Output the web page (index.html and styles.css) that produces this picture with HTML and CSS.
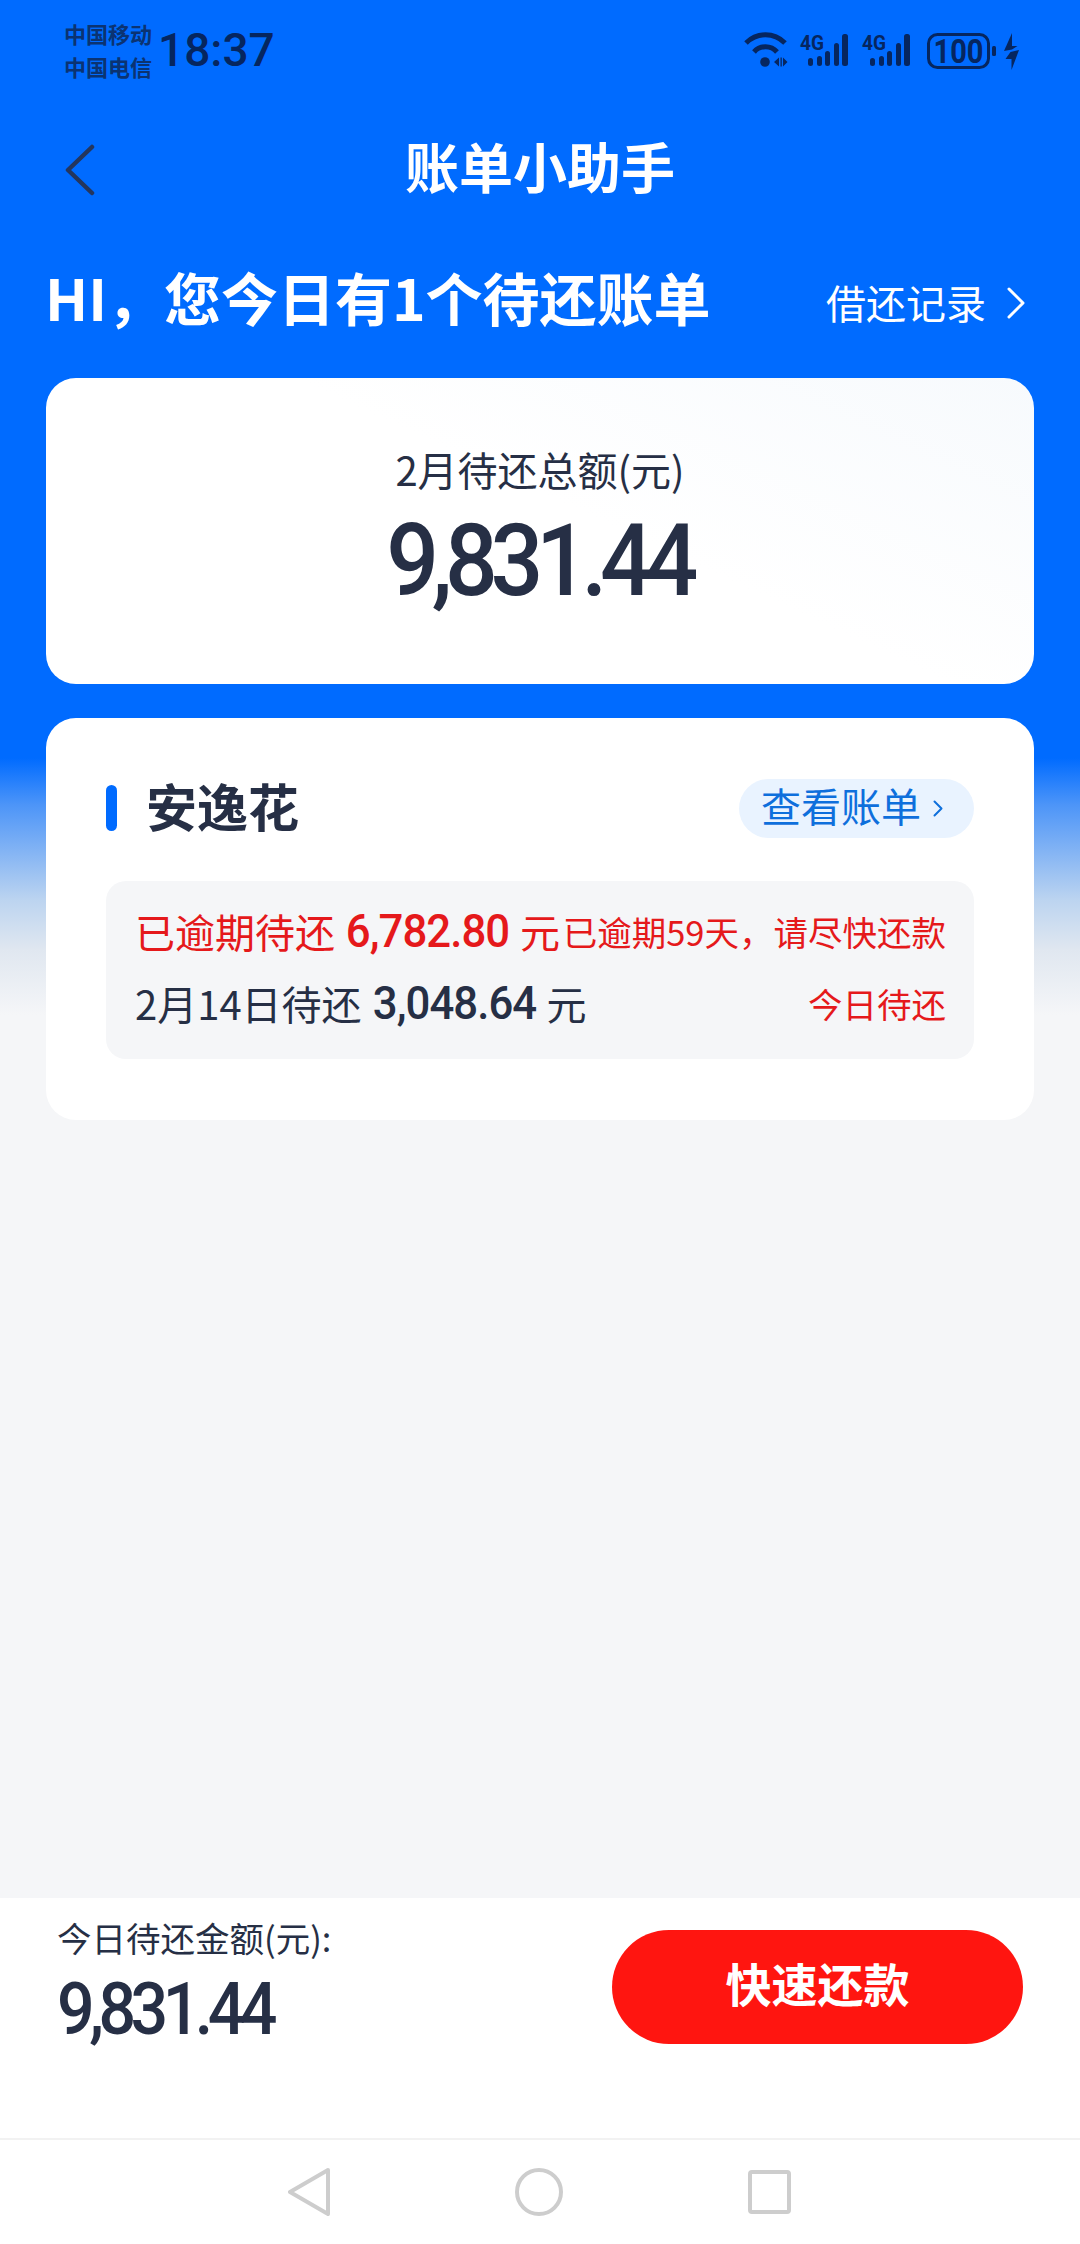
FILE: index.html
```html
<!DOCTYPE html>
<html lang="zh-CN">
<head>
<meta charset="utf-8">
<title>账单小助手</title>
<link rel="stylesheet" href="styles.css">
</head>
<body>
<div class="screen">
  <main class="main">
    <div class="status">
      <div class="carriers"><span>中国移动</span><span>中国电信</span></div>
      <div class="clock">18:37</div>
      <svg class="status-icons" width="276" height="40" viewBox="0 0 276 40">
        <g class="ico-stroke" fill="none" stroke-width="5">
          <path d="M2 12 C13 1 30 1 41 12"/>
          <path d="M10 21 C16 14 27 14 33 21"/>
        </g>
        <circle class="ico-fill" cx="21" cy="31" r="4.8"/>
        <path class="ico-fill" d="M30 31l5-4.500v9zM36.500 26.500h1.300v9h-1.300zM39 26.500l4.500 4.500-4.500 4.500z"/>
        <text class="ico-4g" x="56" y="19" textLength="24" lengthAdjust="spacingAndGlyphs">4G</text>
        <g class="ico-fill">
          <rect x="64" y="27" width="5" height="8" rx="2.5"/>
          <rect x="73" y="25" width="5" height="10" rx="2.5"/>
          <rect x="81" y="20" width="5" height="15" rx="2.5"/>
          <rect x="90" y="12" width="5" height="23" rx="2.5"/>
          <rect x="98" y="3" width="6" height="32" rx="2.5"/>
        </g>
        <text class="ico-4g" x="118" y="19" textLength="24" lengthAdjust="spacingAndGlyphs">4G</text>
        <g class="ico-fill">
          <rect x="126" y="27" width="5" height="8" rx="2.5"/>
          <rect x="135" y="25" width="5" height="10" rx="2.5"/>
          <rect x="143" y="20" width="5" height="15" rx="2.5"/>
          <rect x="152" y="12" width="5" height="23" rx="2.5"/>
          <rect x="160" y="3" width="6" height="32" rx="2.5"/>
        </g>
        <rect class="ico-stroke" x="184.5" y="3.5" width="60" height="33" rx="9" fill="none" stroke-width="3"/>
        <text class="ico-batt" x="214.5" y="31.500" text-anchor="middle" textLength="50" lengthAdjust="spacingAndGlyphs">100</text>
        <rect class="ico-fill" x="248" y="15" width="4" height="10" rx="1.5"/>
        <path class="ico-fill" d="M268 2 L260 20 L268 18.500 Z"/>
        <path class="ico-fill" d="M268 3 L268 15 L273.500 15 L268 18.500 Z"/>
        <path class="ico-fill" d="M266.500 21 L275 19 L267.500 39 L267.500 28 L261.500 28 Z"/>
      </svg>
    </div>

    <header class="navbar">
      <svg class="back" width="31" height="52" viewBox="0 0 31 52"><path d="M28 3 L4 26 L28 49" fill="none" stroke-width="4.500" stroke-linecap="round" stroke-linejoin="round"/></svg>
      <h1 class="title">账单小助手</h1>
    </header>

    <section class="greeting">
      <h2 class="hello">HI，您今日有1个待还账单</h2>
      <div class="records">借还记录
        <svg class="records-arrow" width="20" height="34" viewBox="0 0 20 34"><path d="M3 3 L17 17 L3 31" fill="none" stroke="#fff" stroke-width="3" stroke-linecap="round" stroke-linejoin="round"/></svg>
      </div>
    </section>

    <section class="card total">
      <div class="total-label">2月待还总额(元)</div>
      <div class="total-num"><span class="num num-lg">9,831.44</span></div>
    </section>

    <section class="card bills">
      <div class="bills-head">
        <div class="bills-name"><i class="bar"></i><span class="name">安逸花</span></div>
        <div class="pill"><span class="pill-text">查看账单</span><svg class="pill-arrow" width="10" height="17" viewBox="0 0 10 17"><path d="M1.500 1.500 L8.500 8.500 L1.500 15.500" fill="none" stroke-width="2" stroke-linecap="round" stroke-linejoin="round"/></svg></div>
      </div>
      <div class="rows">
        <div class="row red">
          <div class="row-left">已逾期待还<span class="num num-sm">6,782.80</span>元</div>
          <div class="row-note">已逾期59天，请尽快还款</div>
        </div>
        <div class="row">
          <div class="row-left">2月14日待还<span class="num num-sm">3,048.64</span>元</div>
          <div class="row-note red">今日待还</div>
        </div>
      </div>
    </section>
  </main>

  <footer class="paybar">
    <div class="pay-info">
      <div class="pay-label">今日待还金额(元):</div>
      <div class="pay-num"><span class="num num-md">9,831.44</span></div>
    </div>
    <button class="pay-btn">快速还款</button>
  </footer>

  <nav class="sysnav">
    <svg width="42" height="48" viewBox="0 0 42 48"><path d="M40 2 L2 24 L40 46 Z" fill="none" stroke="#cdcdcd" stroke-width="4" stroke-linejoin="round"/></svg>
    <svg width="48" height="48" viewBox="0 0 48 48"><circle cx="24" cy="24" r="22" fill="none" stroke="#cdcdcd" stroke-width="4"/></svg>
    <svg width="43" height="44" viewBox="0 0 43 44"><rect x="2" y="2" width="39" height="40" rx="2" fill="none" stroke="#cdcdcd" stroke-width="4"/></svg>
  </nav>
</div>
</body>
</html>
```
FILE: styles.css
```css
* { box-sizing: border-box; }
html, body { margin: 0; padding: 0; }
body {
  width: 1080px;
  height: 2244px;
  overflow: hidden;
  background: #f5f6f8;
  font-family: "Inter", "Noto Sans CJK SC", sans-serif;
  color: #262f45;
}
.screen { height: 2244px; display: flex; flex-direction: column; }
.main {
  flex: 1;
  padding: 0 46px;
  background: linear-gradient(180deg, #006bff 0, #006bff 758px, #4d95f8 805px, #bcd4f0 900px, #e0e7f0 950px, #f5f6f8 1015px);
}

/* status bar */
.status { height: 100px; display: flex; align-items: flex-start; margin-left: 18px; margin-right: 14px; }
.carriers {
  display: flex; flex-direction: column; gap: 11px;
  margin-top: 22px;
  font: 700 22px/22px "Noto Sans CJK SC", sans-serif;
  color: #0b3372;
  width: 94px;
}
.clock {
  margin-top: 22px;
  font: 500 46px/56px "Roboto", sans-serif;
  color: #06265f;
}
.status-icons { margin-left: auto; margin-top: 31px; }
.ico-fill { fill: #06265f; }
.ico-stroke { stroke: #06265f; }
.ico-4g { font: 700 21px "Roboto", sans-serif; fill: #06265f; }
.ico-batt { font: 700 33px "Roboto", sans-serif; fill: #06265f; }

/* nav bar */
.navbar { height: 100px; position: relative; display: flex; align-items: center; justify-content: center; margin-top: 16px; }
.back { position: absolute; left: 18px; top: 28px; stroke: #24365e; }
.title { margin: 0; font: 700 54px/100px "Noto Sans CJK SC", sans-serif; color: #fff; }

/* greeting */
.greeting { display: flex; align-items: center; justify-content: space-between; height: 80px; margin-top: 43px; }
.hello { margin: 0 0 6px -1px; font: 700 57px/80px "Noto Sans CJK SC", sans-serif; color: #fff; white-space: nowrap; }
.records { display: flex; align-items: center; font: 400 40px/60px "Noto Sans CJK SC", sans-serif; color: #fff; margin: 6px 8px 0 0; gap: 20px; }
.records-arrow { margin-top: 2px; }

/* cards */
.card { background: #fff; border-radius: 30px; }
.total {
  height: 306px;
  margin-top: 39px;
  padding-top: 61px;
  text-align: center;
  background: linear-gradient(205deg, #f7fafd 0, #fff 45%);
}
.total-label { font: 400 40px/60px "Noto Sans CJK SC", sans-serif; }
.total-num { margin-top: 7px; height: 110px; display: flex; justify-content: center; }
.num { display: inline-block; font-family: "Roboto", sans-serif; font-weight: 500; white-space: nowrap; }
.num-lg { font-size: 101px; line-height: 110px; letter-spacing: -8px; transform: scaleX(0.92); margin-left: -2px; }

.bills { height: 402px; margin-top: 34px; padding: 60px 60px 0; }
.bills-head { display: flex; align-items: center; justify-content: space-between; height: 60px; }
.bills-name { display: flex; align-items: center; gap: 29px; }
.bar { display: block; width: 11px; height: 46px; border-radius: 6px; background: #006bff; }
.name { margin-bottom: 6px; font: 700 51px/60px "Noto Sans CJK SC", sans-serif; }
.pill {
  display: flex; align-items: center; gap: 12px;
  width: 235px; height: 59px; padding-left: 22px;
  border-radius: 30px;
  background: #e9f3ff;
  color: #0e6fdc;
  font: 400 40px/59px "Noto Sans CJK SC", sans-serif;
  stroke: #0e6fdc;
}
.pill-text { margin-bottom: 5px; }
.rows { height: 178px; margin-top: 43px; padding: 21px 28px 0 29px; background: #f5f6f8; border-radius: 20px; display: flex; flex-direction: column; gap: 14px; }
.row { display: flex; align-items: center; justify-content: space-between; height: 58px; font: 400 40px/58px "Noto Sans CJK SC", sans-serif; white-space: nowrap; }
.row-left { display: flex; align-items: center; }
.row-note { font-size: 34.5px; }
.red { color: #e5191b; }
.num-sm { font-size: 46px; line-height: 58px; width: 185px; text-align: center; letter-spacing: -1px; transform: scaleX(0.95); }

/* pay bar */
.paybar { height: 240px; background: #fff; display: flex; justify-content: space-between; padding: 17px 57px 0 57px; }
.pay-label { font: 400 34.5px/44px "Noto Sans CJK SC", sans-serif; }
.pay-num { margin-top: 9px; }
.num-md { font-size: 72px; line-height: 84px; letter-spacing: -6px; transform: scaleX(0.92); transform-origin: left center; }
.pay-btn {
  width: 411px; height: 114px; margin-top: 15px;
  border: 0; border-radius: 57px;
  background: #ff1510; color: #fff;
  font: 700 46px/104px "Noto Sans CJK SC", sans-serif;
  padding: 0 0 10px;
}

/* system nav */
.sysnav {
  height: 106px; background: #fff;
  border-top: 2px solid #f2f2f2;
  display: flex; align-items: center; justify-content: center; gap: 185px;
  padding-right: 1px;
}
```
